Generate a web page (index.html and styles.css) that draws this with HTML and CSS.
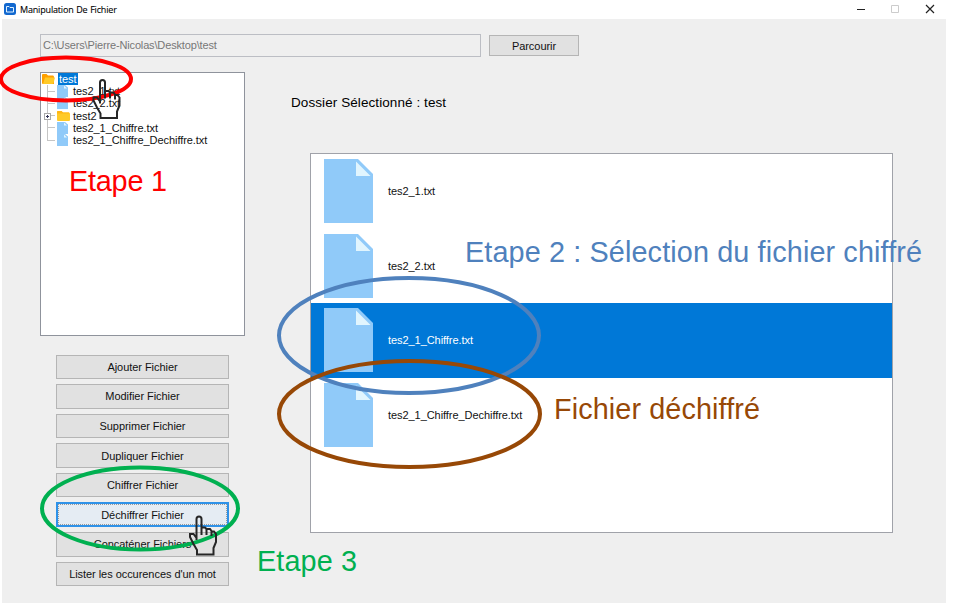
FILE: index.html
```html
<!DOCTYPE html>
<html lang="fr">
<head>
<meta charset="utf-8">
<title>Manipulation De Fichier</title>
<link rel="stylesheet" href="styles.css">
</head>
<body>
<svg class="defs" width="0" height="0">
  <symbol id="page" viewBox="0 0 49 64"><path d="M0 0H34L49 15V64H0Z" fill="#90caf9"/><path d="M32 2.500V17H46.500Z" fill="#e1f5fe"/></symbol>
  <symbol id="smallpage" viewBox="0 0 11 12" preserveAspectRatio="none"><path d="M0 0H8L11 2.500V12H0Z" fill="#90caf9"/><path d="M7 .5V3.500H10Z" fill="#e1f5fe"/></symbol>
  <symbol id="hand" viewBox="0 0 30 41"><path d="M8 25V4Q8 1.500 10.500 1.500T13 4V20V12.500H16.500L18 14V20V14H21.500L23 16V21V16.500H25.500L27.500 19V27L25 33V39.500H8.500V35L5 29L1.500 22V19H5L8 23" fill="none" stroke="#262626" stroke-width="2"/></symbol>
</svg>
<div class="window">
  <header class="titlebar">
    <svg class="appicon" viewBox="0 0 12 12"><rect width="12" height="12" rx="2.500" fill="#1268cf"/><path d="M2.500 3.500H5L6 4.500H9.500V9H2.500Z" fill="none" stroke="#dff1ff"/></svg>
    <span class="title">Manipulation De Fichier</span>
    <svg class="controls" viewBox="0 0 80 12"><path d="M1 6.500H9" stroke="#222"/><path d="M35.500 2.500H42.500V9.500H35.500Z" fill="none" stroke="#ccc"/><path d="M70 2L78 10M78 2L70 10" stroke="#222" stroke-width="1.200"/></svg>
  </header>
  <main class="content">
    <div class="pathbar">
      <div class="path">C:\Users\Pierre-Nicolas\Desktop\test</div>
      <button class="btn browse">Parcourir</button>
    </div>
    <div class="columns">
      <aside class="left">
        <div class="tree">
          <div class="node root"><svg class="folder" viewBox="0 0 13 10"><path d="M0 1Q0 0 1 0H4.500L6 1.500H11Q12 1.500 12 3V10H1Q0 10 0 9Z" fill="#ffa000"/><path d="M3 3.500H13L11.500 9Q11.200 10 10 10H1Z" fill="#ffca28"/></svg><span class="sel">test</span></div>
          <div class="node"><i class="branch"></i><svg class="doc"><use href="#smallpage"/></svg><span>tes2_1.txt</span></div>
          <div class="node"><i class="branch"></i><svg class="doc"><use href="#smallpage"/></svg><span>tes2_2.txt</span></div>
          <div class="node"><i class="branch plus"></i><svg class="folder closed" viewBox="0 0 13 10"><path d="M0 1Q0 0 1 0H4.500L6 1.500H12Q13 1.500 13 3V9Q13 10 12 10H1Q0 10 0 9Z" fill="#ffca28"/><path d="M0 1Q0 0 1 0H4.500L6 1.500H12V2.500H0Z" fill="#ffb515"/></svg><span>test2</span></div>
          <div class="node"><i class="branch"></i><svg class="doc"><use href="#smallpage"/></svg><span>tes2_1_Chiffre.txt</span></div>
          <div class="node"><i class="branch last"></i><svg class="doc"><use href="#smallpage"/></svg><span>tes2_1_Chiffre_Dechiffre.txt</span></div>
        </div>
        <div class="actions">
          <button class="btn">Ajouter Fichier</button>
          <button class="btn">Modifier Fichier</button>
          <button class="btn">Supprimer Fichier</button>
          <button class="btn">Dupliquer Fichier</button>
          <button class="btn">Chiffrer Fichier</button>
          <button class="btn active">Déchiffrer Fichier</button>
          <button class="btn">Concaténer Fichiers</button>
          <button class="btn">Lister les occurences d'un mot</button>
        </div>
      </aside>
      <section class="right">
        <div class="heading">Dossier Sélectionné : test</div>
        <div class="files">
          <div class="file"><svg><use href="#page"/></svg><span>tes2_1.txt</span></div>
          <div class="file"><svg><use href="#page"/></svg><span>tes2_2.txt</span></div>
          <div class="file selected"><svg><use href="#page"/></svg><span>tes2_1_Chiffre.txt</span></div>
          <div class="file"><svg><use href="#page"/></svg><span>tes2_1_Chiffre_Dechiffre.txt</span></div>
        </div>
      </section>
    </div>
  </main>
</div>
<svg class="notes" viewBox="0 0 970 603">
  <g fill="none" stroke-width="4">
    <ellipse cx="66" cy="79" rx="65" ry="21.500" stroke="#f00"/>
    <ellipse cx="409" cy="335.500" rx="130" ry="57.500" stroke="#4f81bd"/>
    <ellipse cx="409.500" cy="414" rx="130.500" ry="53" stroke="#974806"/>
    <ellipse cx="140" cy="508.500" rx="98" ry="41" stroke="#00b050"/>
  </g>
  <use href="#hand" x="92" y="78.500" width="30" height="41"/>
  <use href="#hand" x="188.500" y="515" width="30" height="41"/>
  <g class="labels">
    <text x="69" y="191" textLength="98" fill="#f00">Etape 1</text>
    <text x="465" y="262" textLength="457" fill="#4f81bd">Etape 2 : Sélection du fichier chiffré</text>
    <text x="554" y="419" textLength="206" fill="#974806">Fichier déchiffré</text>
    <text x="257" y="571" textLength="100" fill="#00b050">Etape 3</text>
  </g>
</svg>
</body>
</html>
```

FILE: styles.css
```css
* { box-sizing: border-box; }
body { margin: 0; background: #fff; color: #111; font: 11px "Liberation Sans", Arial, sans-serif; overflow: hidden; }
.defs { position: absolute; }
.window { width: 970px; height: 603px; display: flex; flex-direction: column; }
.titlebar { height: 19px; flex: none; display: flex; align-items: center; padding: 0 0 1px 4px; width: 946px; }
.appicon { width: 12px; height: 12px; margin-right: 4px; }
.title { font: 9px "Open Sans", "Noto Sans", sans-serif; color: #000; letter-spacing: -.17px; word-spacing: .5px; -webkit-text-stroke: .1px #000; }
.controls { width: 80px; height: 12px; margin-left: auto; margin-right: 10px; }
.content { margin-left: 2px; width: 944px; height: 584px; background: #efefef; padding: 15px 0 0 38px; }
.pathbar { display: flex; align-items: center; gap: 8px; height: 23px; }
.path { width: 441px; height: 23px; line-height: 20px; border: 1px solid #bcbec4; padding-left: 2px; color: #777; letter-spacing: -.15px; }
.btn { height: 24.600px; padding: 0; margin: 0; border: 1px solid #b5b5b5; background: #e1e1e1; color: #111; font: inherit; text-align: center; letter-spacing: -.05px; }
.browse { width: 90px; height: 21px; }
.columns { display: flex; margin-top: 15px; }
.left { width: 205px; }
.tree { height: 264px; border: 1px solid #8f939c; background: #fff; }
.node { display: flex; align-items: center; height: 12.200px; padding-left: 5px; white-space: nowrap; }
.root { padding-left: 1px; }
.node svg { flex: none; }
.node span { margin-left: 4px; letter-spacing: -.06px; }
.node .sel { margin-left: 3px; padding: 0 1px; background: #0078d7; color: #fff; line-height: 12px; }
.folder { width: 13px; height: 10px; }
.closed { margin-right: -1px; }
.doc { width: 11px; height: 12.200px; margin: 0 1px 0 0; }
.doc use { width: 11px; height: 12.200px; }
.branch { width: 10px; height: 100%; margin-left: 1px; position: relative; background: linear-gradient(#c5c5c5, #c5c5c5) 0 0 / 1px 100% no-repeat, linear-gradient(#c5c5c5, #c5c5c5) 0 50% / 8px 1px no-repeat; }
.branch.last { background-size: 1px 55%, 8px 1px; }
.plus::before { content: ""; position: absolute; left: -3px; top: 3px; box-sizing: border-box; width: 7px; height: 7px; border: 1px solid #aaa; background: linear-gradient(#335, #335) center / 3px 1px no-repeat, linear-gradient(#335, #335) center / 1px 3px no-repeat, #fff; }
.actions { display: flex; flex-direction: column; gap: 5px; width: 173px; margin: 18.500px 0 0 16px; }
.active { border: 2px solid #2f92e8; background: #e5ecf3; outline: 1px dotted #999; outline-offset: -3px; }
.right { margin-left: 46px; }
.heading { margin-top: 23px; height: 16px; line-height: 16px; font-size: 13.500px; color: #000; letter-spacing: .08px; }
.files { width: 583px; height: 380px; margin: 42px 0 0 19px; border: 1px solid #a0a2a9; background: #fff; }
.file { height: 74.600px; display: flex; align-items: center; padding-left: 13px; letter-spacing: -.06px; }
.file svg { width: 49px; height: 64px; margin-right: 15px; }
.selected { background: #0078d7; color: #fff; }
.notes { position: absolute; left: 0; top: 0; width: 970px; height: 603px; pointer-events: none; }
.labels { font-size: 28.800px; }
```
